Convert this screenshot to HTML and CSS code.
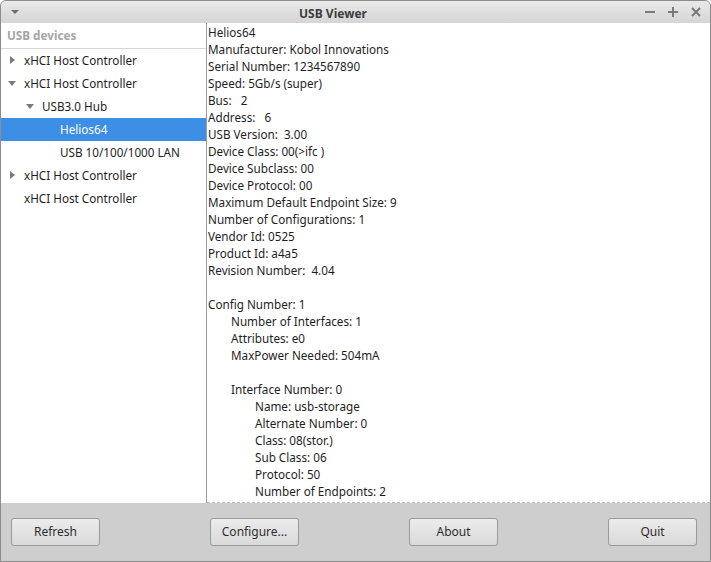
FILE: index.html
```html
<!DOCTYPE html>
<html>
<head>
  <title>USB Viewer</title>
  <link rel="stylesheet" href="styles.css">
</head>
<body>
  <div class="window">
    <div class="titlebar">
      <span class="menu-arrow"></span>
      <span class="title">USB Viewer</span>
      <div class="controls">
        <svg width="12" height="12" viewBox="0 0 12 12"><rect x="1" y="5" width="10" height="2" fill="#7a7a7a"/></svg>
        <svg width="12" height="12" viewBox="0 0 12 12"><rect x="1" y="5" width="10" height="2" fill="#7a7a7a"/><rect x="5" y="1" width="2" height="10" fill="#7a7a7a"/></svg>
        <svg width="12" height="12" viewBox="0 0 12 12"><path d="M2 2 L10 10 M10 2 L2 10" stroke="#7a7a7a" stroke-width="2"/></svg>
      </div>
    </div>
    <div class="panes">
      <div class="tree">
        <div class="tree-header">USB devices</div>
        <div class="row"><span class="exp closed"></span>xHCI Host Controller</div>
        <div class="row"><span class="exp open"></span>xHCI Host Controller</div>
        <div class="row level1"><span class="exp open"></span>USB3.0 Hub</div>
        <div class="row level2 selected"><span class="exp"></span>Helios64</div>
        <div class="row level2"><span class="exp"></span>USB 10/100/1000 LAN</div>
        <div class="row"><span class="exp closed"></span>xHCI Host Controller</div>
        <div class="row"><span class="exp"></span>xHCI Host Controller</div>
      </div>
      <div class="details">
        <div>Helios64</div>
        <div>Manufacturer: Kobol Innovations</div>
        <div>Serial Number: 1234567890</div>
        <div>Speed: 5Gb/s (super)</div>
        <div>Bus:&nbsp;&nbsp; 2</div>
        <div>Address:&nbsp;&nbsp; 6</div>
        <div>USB Version:&nbsp; 3.00</div>
        <div>Device Class: 00(&gt;ifc )</div>
        <div>Device Subclass: 00</div>
        <div>Device Protocol: 00</div>
        <div>Maximum Default Endpoint Size: 9</div>
        <div>Number of Configurations: 1</div>
        <div>Vendor Id: 0525</div>
        <div>Product Id: a4a5</div>
        <div>Revision Number:&nbsp; 4.04</div>
        <div class="blank"></div>
        <div>Config Number: 1</div>
        <div class="ind1">Number of Interfaces: 1</div>
        <div class="ind1">Attributes: e0</div>
        <div class="ind1">MaxPower Needed: 504mA</div>
        <div class="blank"></div>
        <div class="ind1">Interface Number: 0</div>
        <div class="ind2">Name: usb-storage</div>
        <div class="ind2">Alternate Number: 0</div>
        <div class="ind2">Class: 08(stor.)</div>
        <div class="ind2">Sub Class: 06</div>
        <div class="ind2">Protocol: 50</div>
        <div class="ind2">Number of Endpoints: 2</div>
      </div>
    </div>
    <div class="buttons">
      <button>Refresh</button>
      <button>Configure...</button>
      <button>About</button>
      <button>Quit</button>
    </div>
  </div>
</body>
</html>
```

FILE: styles.css
```css
html, body {
  margin: 0;
  padding: 0;
  background: #fff;
}

body {
  font-family: "Noto Sans", "Open Sans", sans-serif;
  font-size: 11.7px;
  color: #1e1e1e;
}

.window {
  width: 711px;
  height: 562px;
  box-sizing: border-box;
  border: 1px solid #8c8c8c;
  border-radius: 6px 6px 0 0;
  display: flex;
  flex-direction: column;
  overflow: hidden;
  background: #cecece;
}

.titlebar {
  height: 22px;
  flex: none;
  display: flex;
  align-items: center;
  background: linear-gradient(#e9e9e9, #d5d5d5);
}

.menu-arrow {
  width: 0;
  height: 0;
  margin-left: 10px;
  margin-right: 9px;
  border-left: 4px solid transparent;
  border-right: 4px solid transparent;
  border-top: 4px solid #6e6e6e;
}

.title {
  flex: 1;
  text-align: center;
  font-weight: bold;
  font-size: 12px;
  color: #3c3c3c;
  padding-top: 2px;
}

.controls {
  margin-right: 8px;
  margin-left: 6px;
  display: flex;
  gap: 11px;
}

.panes {
  height: 480px;
  flex: none;
  display: flex;
  background: #fff;
}

.tree {
  width: 205px;
  flex: none;
  border-right: 1px solid #9a9a9a;
  background: #fff;
}

.tree-header {
  height: 25px;
  line-height: 25px;
  padding-left: 6px;
  font-weight: bold;
  color: #a5a5a5;
  border-bottom: 1px solid #d6d6d6;
}

.row {
  height: 23px;
  line-height: 23px;
  display: flex;
  align-items: center;
  padding-left: 8px;
  white-space: nowrap;
}

.row.level1 { padding-left: 26px; }
.row.level2 { padding-left: 44px; }

.row.selected {
  background: #3d8ee5;
  color: #fff;
}

.exp {
  width: 15px;
  height: 23px;
  position: relative;
}

.exp.closed::before {
  content: "";
  position: absolute;
  left: 1px;
  top: 7px;
  border-top: 4px solid transparent;
  border-bottom: 4px solid transparent;
  border-left: 5px solid #7a7a7a;
}

.exp.open::before {
  content: "";
  position: absolute;
  left: -1px;
  top: 9px;
  border-left: 4px solid transparent;
  border-right: 4px solid transparent;
  border-top: 5px solid #7a7a7a;
}

.details {
  flex: 1;
  padding: 1px 0 0 1px;
  line-height: 17px;
  border-bottom: 1px dashed #bdbdbd;
  overflow: hidden;
}

.details div {
  white-space: nowrap;
}

.details .blank { height: 17px; }
.details .ind1 { padding-left: 23px; }
.details .ind2 { padding-left: 47px; }

.buttons {
  flex: 1;
  display: flex;
  justify-content: space-between;
  align-items: center;
  padding: 0 13px 0 10px;
}

button {
  width: 89px;
  height: 28px;
  font-family: "Noto Sans", "Open Sans", sans-serif;
  font-size: 12px;
  color: #2e2e2e;
  border: 1px solid #9a9a9a;
  border-radius: 3px;
  background: linear-gradient(#ececec, #d9d9d9);
  padding: 0 0 1px;
}
```
